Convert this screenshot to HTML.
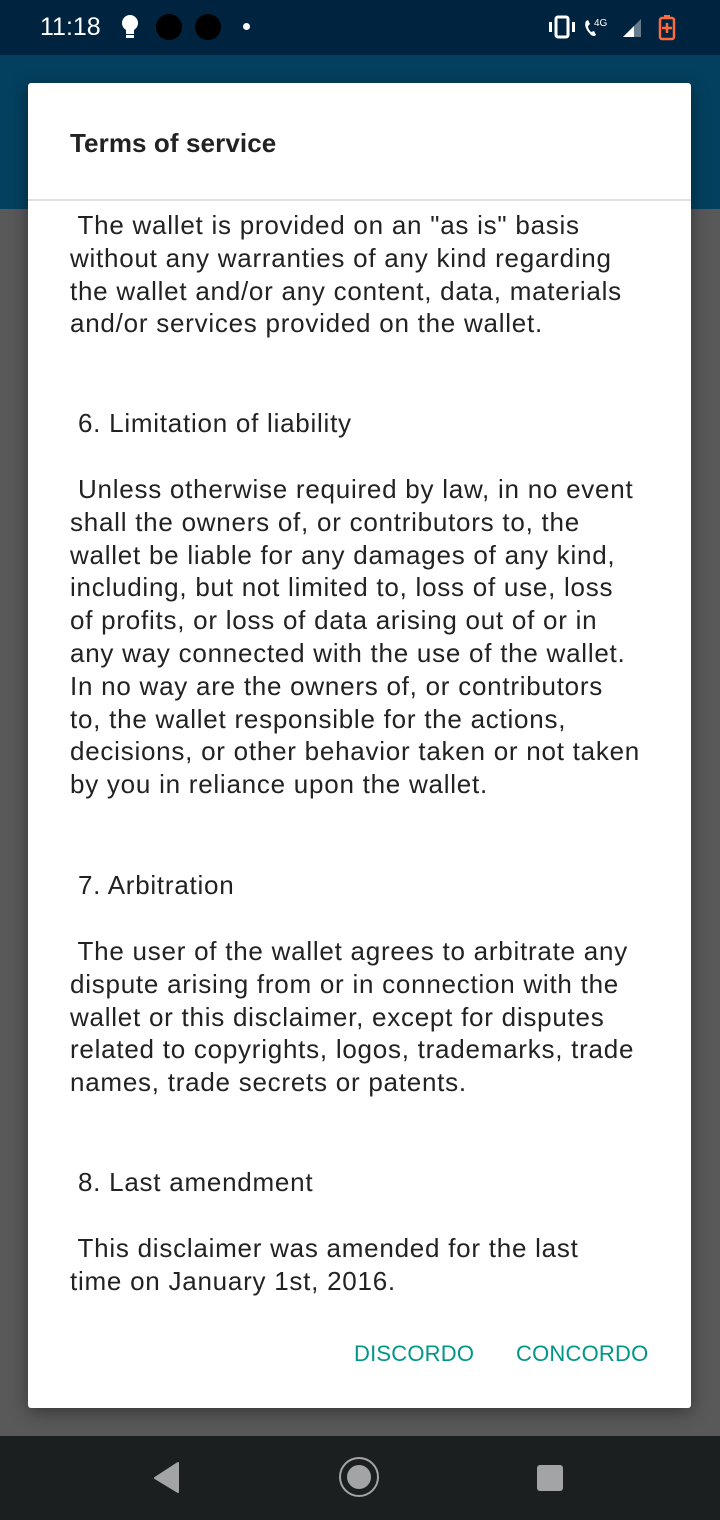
<!DOCTYPE html>
<html><head><meta charset="utf-8"><style>
*{margin:0;padding:0;box-sizing:border-box}
body{width:720px;height:1520px;position:relative;overflow:hidden;background:#5b5b5b;font-family:"Liberation Sans",sans-serif}
.sb{position:absolute;left:0;top:0;width:720px;height:55px;background:#00233f}
.ab{position:absolute;left:0;top:55px;width:720px;height:154px;background:#03405f}
.dim{position:absolute;left:0;top:209px;width:720px;height:1227px;background:#595959}
.nav{position:absolute;left:0;top:1436px;width:720px;height:84px;background:#1c1f20}
.dlg{position:absolute;left:28px;top:83px;width:663px;height:1325px;background:#fff;border-radius:3px;box-shadow:0 4px 18px rgba(0,0,0,.4)}
.title{position:absolute;left:70px;top:128px;font-size:26px;font-weight:bold;color:#222;letter-spacing:0.1px}
.div{position:absolute;left:28px;top:199px;width:663px;height:2px;background:#e0e0e0}
.t{position:absolute;left:70px;font-size:26px;letter-spacing:0.75px;color:#222;white-space:pre;line-height:32.8px}
.btn{position:absolute;top:1341px;font-size:22px;color:#009688;letter-spacing:0.2px}
.time{position:absolute;left:40px;top:13px;color:#fff;font-size:25px}
</style></head><body>
<div class="sb"></div><div class="ab"></div><div class="dim"></div>
<div class="time">11:18</div>
<svg style="position:absolute;left:120px;top:14px" width="22" height="26"><circle cx="10" cy="9" r="8" fill="#fff"/><rect x="6" y="15" width="8" height="5" fill="#fff"/><rect x="6" y="21" width="8" height="3" fill="#fff"/></svg>
<div style="position:absolute;left:156px;top:14px;width:26px;height:26px;border-radius:50%;background:#000"></div>
<div style="position:absolute;left:195px;top:14px;width:26px;height:26px;border-radius:50%;background:#000"></div>
<div style="position:absolute;left:243px;top:23px;width:7px;height:7px;border-radius:50%;background:#fff"></div>
<svg style="position:absolute;left:546px;top:14px" width="135" height="28">
<rect x="10" y="3" width="12" height="20" rx="2" fill="none" stroke="#fff" stroke-width="3"/><rect x="3" y="8" width="3" height="10" fill="#fff"/><rect x="26" y="8" width="3" height="10" fill="#fff"/>
<path d="M40 7 q-3 6 5 14 q3 2 5 0 l-2-4 -3 1 q-3-3 -3-6 l2-2 -2-4z" fill="#fff"/><text x="48" y="12" font-size="10" fill="#fff" font-family="Liberation Sans">4G</text>
<path d="M77 23 L95 5 L95 23Z" fill="#fff" opacity=".4"/><path d="M77 23 L88 12 L88 23Z" fill="#fff"/>
<rect x="114" y="4" width="14" height="21" rx="2" fill="none" stroke="#ff6a3d" stroke-width="2.5"/><rect x="118" y="1" width="6" height="3" fill="#ff6a3d"/><path d="M121 9v10M116 14h10" stroke="#ff6a3d" stroke-width="2.5"/>
</svg>
<div class="dlg"></div>
<div class="title">Terms of service</div>
<div class="div"></div>
<div class="t" style="top:209px"> The wallet is provided on an "as is" basis
without any warranties of any kind regarding
the wallet and/or any content, data, materials
and/or services provided on the wallet.</div>
<div class="t" style="top:407px"> 6. Limitation of liability</div>
<div class="t" style="top:473px"> Unless otherwise required by law, in no event
shall the owners of, or contributors to, the
wallet be liable for any damages of any kind,
including, but not limited to, loss of use, loss
of profits, or loss of data arising out of or in
any way connected with the use of the wallet.
In no way are the owners of, or contributors
to, the wallet responsible for the actions,
decisions, or other behavior taken or not taken
by you in reliance upon the wallet.</div>
<div class="t" style="top:869px"> 7. Arbitration</div>
<div class="t" style="top:935px"> The user of the wallet agrees to arbitrate any
dispute arising from or in connection with the
wallet or this disclaimer, except for disputes
related to copyrights, logos, trademarks, trade
names, trade secrets or patents.</div>
<div class="t" style="top:1166px"> 8. Last amendment</div>
<div class="t" style="top:1232px"> This disclaimer was amended for the last
time on January 1st, 2016.</div>
<div class="btn" style="left:354px">DISCORDO</div>
<div class="btn" style="left:516px">CONCORDO</div>
<div class="nav"></div>
<svg style="position:absolute;left:150px;top:1455px" width="420" height="46">
<path d="M28 8 L28 37 L5 23Z" fill="#a3a4a6" stroke="#a3a4a6" stroke-width="2" stroke-linejoin="round"/>
<circle cx="209" cy="22" r="19" fill="none" stroke="#a3a4a6" stroke-width="2"/><circle cx="209" cy="22" r="12" fill="#a3a4a6"/>
<rect x="387" y="10" width="26" height="26" rx="3" fill="#a3a4a6"/>
</svg>
</body></html>
